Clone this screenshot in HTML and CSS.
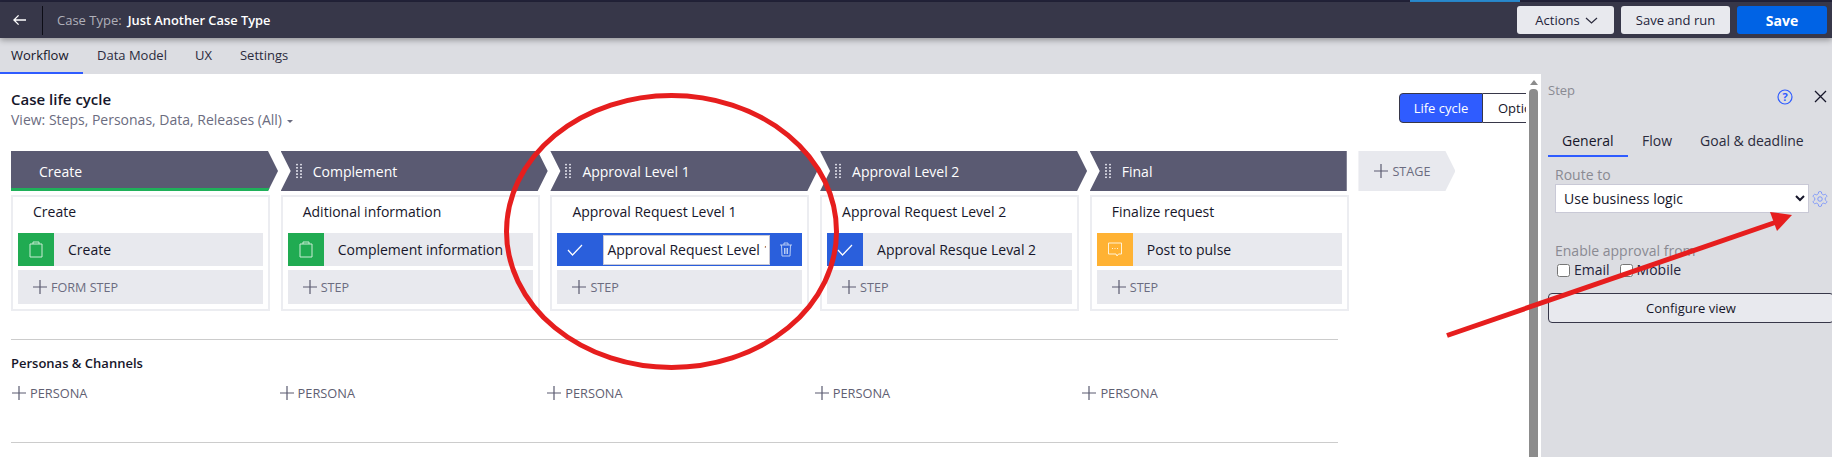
FILE: index.html
```html
<!DOCTYPE html>
<html lang="en">
<head>
    <meta charset="UTF-8">
    <meta name="viewport" content="width=device-width, initial-scale=1.0">
    <title>Case Type - Just Another Case Type</title>

    <link rel="stylesheet" href="styles.css">
</head>
<body>
    <svg class="sprite" width="0" height="0">
        <symbol id="plus" viewBox="0 0 14 14"><path d="M7 0v14M0 7h14" fill="none" stroke="currentColor" stroke-width="1.2"/></symbol>
        <symbol id="clipboard" viewBox="0 0 14 17"><path d="M4 3H1v13h12V3h-3M4 3V1h6v2z" fill="none" stroke="currentColor"/></symbol>
        <symbol id="check" viewBox="0 0 16 12"><path d="M1 6l4.5 5L15 1" fill="none" stroke="currentColor" stroke-width="1.2"/></symbol>
    </svg>

    <div class="top-strip"><span class="strip-active"></span></div>

    <header class="header">
        <button class="back" aria-label="Back">
            <svg width="14" height="12" viewBox="0 0 14 12"><path d="M6 1L1 6l5 5M1 6h13" fill="none" stroke="#fff" stroke-width="1.4"/></svg>
        </button>
        <span class="case-label">Case Type:</span>
        <span class="case-name">Just Another Case Type</span>
        <div class="header-actions">
            <button class="btn btn-actions">Actions
                <svg width="13" height="7" viewBox="0 0 13 7"><path d="M1 1l5.500 5L12 1" fill="none" stroke="#2b2b3d" stroke-width="1.2"/></svg>
            </button>
            <button class="btn btn-run">Save and run</button>
            <button class="btn btn-save">Save</button>
        </div>
    </header>

    <nav class="nav">
        <a class="nav-item active">Workflow</a>
        <a class="nav-item">Data Model</a>
        <a class="nav-item">UX</a>
        <a class="nav-item">Settings</a>
    </nav>

    <div class="workspace">
        <main class="main">
            <div class="main-head">
                <div>
                    <h1 class="title">Case life cycle</h1>
                    <p class="view-line">View: Steps, Personas, Data, Releases (All) <span class="caret"></span></p>
                </div>
                <div class="toggle">
                    <span class="toggle-on">Life cycle</span>
                    <span class="toggle-off">Options</span>
                </div>
            </div>

            <div class="board">
                <!-- Create -->
                <section class="col">
                    <div class="stage stage-first"><span class="stage-name">Create</span></div>
                    <div class="card">
                        <div class="card-title">Create</div>
                        <div class="step">
                            <span class="step-icon green"><svg width="14" height="17"><use href="#clipboard"/></svg></span>
                            <span class="step-name">Create</span>
                        </div>
                        <div class="add-row"><svg class="plus" width="14" height="14"><use href="#plus"/></svg>FORM STEP</div>
                    </div>
                </section>

                <!-- Complement -->
                <section class="col">
                    <div class="stage"><span class="grip"></span><span>Complement</span></div>
                    <div class="card">
                        <div class="card-title">Aditional information</div>
                        <div class="step">
                            <span class="step-icon green"><svg width="14" height="17"><use href="#clipboard"/></svg></span>
                            <span class="step-name">Complement information</span>
                        </div>
                        <div class="add-row"><svg class="plus" width="14" height="14"><use href="#plus"/></svg>STEP</div>
                    </div>
                </section>

                <!-- Approval Level 1 -->
                <section class="col">
                    <div class="stage"><span class="grip"></span><span>Approval Level 1</span></div>
                    <div class="card">
                        <div class="card-title">Approval Request Level 1</div>
                        <div class="step step-editing">
                            <span class="step-icon blue wide"><svg width="16" height="12"><use href="#check"/></svg></span>
                            <input class="step-input" type="text" value="Approval Request Level 1">
                            <svg class="trash" width="14" height="15" viewBox="0 0 14 15"><path d="M1 3h12M5 3V1h4v2M2.500 3l.5 11h8l.5-11M5.500 6v6M7 6v6M8.500 6v6" fill="none" stroke="#b9cdf5"/></svg>
                        </div>
                        <div class="add-row"><svg class="plus" width="14" height="14"><use href="#plus"/></svg>STEP</div>
                    </div>
                </section>

                <!-- Approval Level 2 -->
                <section class="col">
                    <div class="stage"><span class="grip"></span><span>Approval Level 2</span></div>
                    <div class="card">
                        <div class="card-title">Approval Request Level 2</div>
                        <div class="step">
                            <span class="step-icon blue"><svg width="16" height="12"><use href="#check"/></svg></span>
                            <span class="step-name">Approval Resque Leval 2</span>
                        </div>
                        <div class="add-row"><svg class="plus" width="14" height="14"><use href="#plus"/></svg>STEP</div>
                    </div>
                </section>

                <!-- Final -->
                <section class="col">
                    <div class="stage stage-last"><span class="grip"></span><span>Final</span></div>
                    <div class="card">
                        <div class="card-title">Finalize request</div>
                        <div class="step">
                            <span class="step-icon orange">
                                <svg width="16" height="16" viewBox="0 0 16 16"><path d="M1.500 1h13v11h-3l-1.500 2-1-2h-7.500zM5 6.500h1M7.500 6.500h1M10 6.500h1" fill="none" stroke="#fff2d6"/></svg>
                            </span>
                            <span class="step-name">Post to pulse</span>
                        </div>
                        <div class="add-row"><svg class="plus" width="14" height="14"><use href="#plus"/></svg>STEP</div>
                    </div>
                </section>

                <div class="add-stage"><svg class="plus" width="14" height="14"><use href="#plus"/></svg>STAGE</div>
            </div>

            <hr class="divider divider-top">
            <h2 class="section-title">Personas &amp; Channels</h2>
            <div class="personas">
                <div class="persona"><svg class="plus" width="14" height="14"><use href="#plus"/></svg>PERSONA</div>
                <div class="persona"><svg class="plus" width="14" height="14"><use href="#plus"/></svg>PERSONA</div>
                <div class="persona"><svg class="plus" width="14" height="14"><use href="#plus"/></svg>PERSONA</div>
                <div class="persona"><svg class="plus" width="14" height="14"><use href="#plus"/></svg>PERSONA</div>
                <div class="persona"><svg class="plus" width="14" height="14"><use href="#plus"/></svg>PERSONA</div>
            </div>
            <hr class="divider divider-bottom">
        </main>

        <div class="scrollbar"><span class="scroll-arrow"></span><span class="scroll-thumb"></span></div>

        <aside class="panel">
            <div class="panel-head">
                <span class="panel-title">Step</span>
                <svg class="help" width="16" height="16" viewBox="0 0 16 16"><circle cx="8" cy="8" r="7" fill="none" stroke="#2f5cff" stroke-width="1.2"/><text x="8" y="11.500" text-anchor="middle" class="help-mark">?</text></svg>
                <svg class="close" width="13" height="13" viewBox="0 0 13 13"><path d="M1 1l11 11M12 1L1 12" fill="none" stroke="#16162a" stroke-width="1.3"/></svg>
            </div>
            <div class="tabs">
                <span class="tab active">General</span>
                <span class="tab">Flow</span>
                <span class="tab">Goal &amp; deadline</span>
            </div>
            <div class="form">
                <label class="field-label">Route to</label>
                <div class="route-row">
                    <select class="route-select"><option>Use business logic</option></select>
                    <svg class="gear" width="18" height="18" viewBox="0 0 24 24" fill="none" stroke="#6f8cff" stroke-width="1.1">
                        <path d="M12.220 2h-.44a2 2 0 0 0-2 2v.18a2 2 0 0 1-1 1.730l-.43.25a2 2 0 0 1-2 0l-.15-.08a2 2 0 0 0-2.730.73l-.22.38a2 2 0 0 0 .73 2.730l.15.1a2 2 0 0 1 1 1.720v.51a2 2 0 0 1-1 1.740l-.15.09a2 2 0 0 0-.73 2.730l.22.38a2 2 0 0 0 2.730.73l.15-.08a2 2 0 0 1 2 0l.43.25a2 2 0 0 1 1 1.730V20a2 2 0 0 0 2 2h.44a2 2 0 0 0 2-2v-.18a2 2 0 0 1 1-1.730l.43-.25a2 2 0 0 1 2 0l.15.08a2 2 0 0 0 2.730-.73l.22-.39a2 2 0 0 0-.73-2.730l-.15-.08a2 2 0 0 1-1-1.740v-.5a2 2 0 0 1 1-1.740l.15-.09a2 2 0 0 0 .73-2.730l-.22-.38a2 2 0 0 0-2.730-.73l-.15.08a2 2 0 0 1-2 0l-.43-.25a2 2 0 0 1-1-1.730V4a2 2 0 0 0-2-2z"/>
                        <circle cx="12" cy="12" r="3"/>
                    </svg>
                </div>
                <label class="field-label approval-label">Enable approval from</label>
                <div class="checks">
                    <label class="check"><input type="checkbox">Email</label>
                    <label class="check"><input type="checkbox">Mobile</label>
                </div>
            </div>
            <button class="configure">Configure view</button>
        </aside>
    </div>

    <!-- red annotations drawn over the screenshot -->
    <svg class="annotations" width="1832" height="457" viewBox="0 0 1832 457">
        <ellipse cx="671.500" cy="231.500" rx="165" ry="136" fill="none" stroke="#e61e1e" stroke-width="5"/>
        <path d="M1447 335.500L1778 221.500" fill="none" stroke="#e61e1e" stroke-width="5"/>
        <path d="M1792 215L1770 212L1777 231z" fill="#e61e1e"/>
    </svg>
</body>
</html>
```

FILE: styles.css
```css
* {
    box-sizing: border-box;
}

body {
    font-family: "Open Sans", Arial, sans-serif;
    font-size: 13px;
    color: #16162a;
    background-color: #fff;
    margin: 0;
    width: 1832px;
    height: 457px;
    overflow: hidden;
    position: relative;
}

.sprite {
    position: absolute;
}

/* top bar */
.top-strip {
    height: 2px;
    background-color: #23233a;
    padding-left: 1410px;
}
.strip-active {
    display: block;
    width: 110px;
    height: 2px;
    background-color: #2b8fd6;
}

.header {
    height: 36px;
    background-color: #373749;
    display: flex;
    align-items: center;
    position: relative;
    z-index: 2;
    box-shadow: 0 2px 6px rgba(0, 0, 0, .35);
    padding-right: 5px;
}
.back {
    width: 43px;
    height: 29px;
    padding: 0 16px 0 13px;
    background: none;
    border: 0;
    border-right: 1px solid #0d0d16;
    display: flex;
    align-items: center;
    margin-right: 14px;
}
.case-label {
    color: #b0b0b9;
    margin-right: 6px;
}
.case-name {
    color: #fff;
    font-size: 12.85px;
    font-weight: 600;
}
.header-actions {
    margin-left: auto;
    display: flex;
    gap: 7px;
}
.btn {
    font-family: inherit;
    font-size: 13px;
    height: 28px;
    border: 0;
    border-radius: 3px;
    background-color: #e8e9ee;
    color: #23233a;
    display: flex;
    align-items: center;
    justify-content: center;
    gap: 5px;
}
.btn-actions {
    width: 97px;
    padding-right: 4px;
}
.btn-run { width: 109px; }
.btn-save {
    width: 90px;
    background-color: #0063e5;
    color: #fff;
    font-weight: 700;
    font-size: 14px;
}

/* tabs under the top bar */
.nav {
    height: 36px;
    background-color: #dcdde2;
    display: flex;
    align-items: center;
}
.nav-item {
    height: 36px;
    line-height: 35px;
    padding: 0 14px;
    color: #2b2b3d;
}
.nav-item.active {
    padding: 0 14px 0 11px;
    width: 83px;
    color: #16162a;
    border-bottom: 2px solid #2f5cff;
}

.workspace {
    display: flex;
    height: 383px;
}

/* canvas */
.main {
    width: 1529px;
    padding: 16px 3px 0 11px;
    overflow: hidden;
}
.main-head {
    display: flex;
    justify-content: space-between;
    align-items: flex-start;
}
.title {
    font-size: 15px;
    line-height: 18px;
    font-weight: 600;
    margin: 0 0 3px;
}
.view-line {
    font-size: 14px;
    line-height: 18px;
    color: #6b6c80;
    margin: 0;
}
.caret {
    display: inline-block;
    margin-left: 1px;
    vertical-align: middle;
    border: 3px solid transparent;
    border-top-color: #6b6c80;
    border-bottom: 0;
}
.toggle {
    width: 127px;
    height: 30px;
    margin-top: 3px;
    display: flex;
    overflow: hidden;
    line-height: 28px;
    white-space: nowrap;
}
.toggle-on {
    flex: 0 0 84px;
    background-color: #2f5cff;
    color: #fff;
    text-align: center;
    border: 1px solid #373749;
    border-radius: 4px 0 0 4px;
}
.toggle-off {
    flex: 0 0 70px;
    padding-left: 15px;
    border: 1px solid #373749;
    border-left: 0;
}

.board {
    display: flex;
    gap: 10.7px;
    margin-top: 22px;
    align-items: flex-start;
}
.col {
    width: 259px;
}
.stage {
    width: calc(100% + 8px);
    height: 40px;
    margin-bottom: 4px;
    background-color: #5a5a72;
    color: #fff;
    font-size: 14px;
    display: flex;
    align-items: center;
    padding-left: 14px;
    clip-path: polygon(0 0, calc(100% - 10px) 0, 100% 50%, calc(100% - 10px) 100%, 0 100%, 10px 50%);
}
.stage-first {
    padding-left: 28px;
    clip-path: polygon(0 0, calc(100% - 10px) 0, 100% 50%, calc(100% - 10px) 100%, 0 100%);
    border-bottom: 3px solid #1fb05a;
}
.stage-first .stage-name {
    padding-top: 3px;
}
.stage-last {
    width: calc(100% - 2px);
    clip-path: polygon(0 0, 100% 0, 100% 100%, 0 100%, 10px 50%);
}
.grip {
    width: 8px;
    height: 16px;
    margin-right: 10px;
    background-image: radial-gradient(circle, #d2d2de 1px, transparent 1.2px);
    background-size: 4px 3.2px;
}
.card {
    height: 116px;
    border: 2px solid #ecedf1;
    padding: 0 5px 5px;
}
.card-title {
    height: 30px;
    line-height: 30px;
    margin-bottom: 6px;
    padding-left: 15px;
    font-size: 14px;
    white-space: nowrap;
}
.step {
    height: 33px;
    background-color: #e8e9ee;
    display: flex;
    align-items: center;
    margin-bottom: 4px;
    font-size: 14px;
}
.step-icon {
    flex: 0 0 36px;
    height: 33px;
    display: flex;
    align-items: center;
    justify-content: center;
}
.green { background-color: #20ab52; color: #c9ecd4; }
.blue { background-color: #2a5fdc; color: #fff; }
.orange { background-color: #ffb233; }
.step-icon.wide {
    flex-basis: 46px;
    padding-right: 10px;
}
.step-name {
    margin-left: 14px;
    white-space: nowrap;
}
.step-editing {
    background-color: #2a5fdc;
}
.step-input {
    width: 167px;
    height: 30px;
    border: 1px solid #c9c9d6;
    padding: 0 3px;
    font-family: inherit;
    font-size: 14px;
    color: #16162a;
}
.trash {
    margin-left: 9px;
}
.add-row {
    height: 34px;
    background-color: #e8e9ee;
    color: #6b6c80;
    font-size: 12.6px;
    display: flex;
    align-items: center;
    padding-left: 15px;
}
.plus {
    color: #5a5b70;
    margin-right: 4px;
    flex: none;
}
.add-stage {
    width: 97px;
    height: 40px;
    margin-left: -1px;
    background-color: #e8e9ee;
    color: #6b6c80;
    font-size: 12.6px;
    display: flex;
    align-items: center;
    padding-left: 16px;
    clip-path: polygon(0 0, calc(100% - 10px) 0, 100% 50%, calc(100% - 10px) 100%, 0 100%);
}

.divider {
    width: 1327px;
    height: 1px;
    border: 0;
    background-color: #ccc;
    margin: 0;
}
.divider-top {
    margin-top: 28px;
}
.divider-bottom {
    margin-top: 40px;
}
.section-title {
    font-size: 13px;
    line-height: 18px;
    font-weight: 600;
    margin: 14px 0 12px;
}
.personas {
    display: flex;
    height: 18px;
}
.persona {
    width: 267.6px;
    color: #5f6072;
    font-size: 12.8px;
    display: flex;
    align-items: center;
    padding-left: 1px;
}

/* scrollbar between canvas and panel */
.scrollbar {
    width: 12px;
    padding-right: 3px;
}
.scroll-arrow {
    display: block;
    margin: 6px auto 4px;
    width: 0;
    border: 4px solid transparent;
    border-top: 0;
    border-bottom: 5px solid #8c8c8c;
}
.scroll-thumb {
    display: block;
    height: 380px;
    background-color: #8c8c8c;
    border-radius: 4px 4px 0 0;
}

/* right panel */
.panel {
    flex: 1;
    background-color: #dcdde2;
    padding: 7px 0 0 7px;
    overflow: hidden;
}
.panel-head {
    display: flex;
    align-items: flex-start;
    height: 50px;
}
.panel-title {
    color: #8a8a92;
    font-size: 13px;
    line-height: 18px;
}
.help {
    margin: 8px 0 0 202px;
    flex: none;
}
.help-mark {
    font-size: 11px;
    font-weight: 700;
    fill: #2f5cff;
}
.close {
    margin: 9px 0 0 21px;
    flex: none;
}
.tabs {
    display: flex;
    width: 284px;
    height: 26px;
    font-size: 14px;
}
.tab {
    padding: 0 14px;
    height: 26px;
    line-height: 20px;
    white-space: nowrap;
    color: #2b2b3d;
}
.tab.active {
    width: 80px;
    color: #16162a;
    border-bottom: 2px solid #2f5cff;
}
.form {
    padding: 9px 0 0 7px;
    font-size: 14px;
}
.field-label {
    display: block;
    color: #8a8a92;
    line-height: 18px;
}
.route-row {
    display: flex;
    align-items: center;
    gap: 2px;
}
.route-select {
    width: 254px;
    height: 29px;
    background-color: #fff;
    border: 1px solid #c9c9d6;
    padding-left: 4px;
    font-family: inherit;
    font-size: 14px;
    color: #16162a;
}
.approval-label {
    margin-top: 29px;
}
.checks {
    display: flex;
    gap: 8px;
    margin-top: 1px;
}
.check {
    display: flex;
    align-items: center;
    height: 18px;
    line-height: 18px;
    color: #23233a;
}
.check input {
    width: 13px;
    height: 13px;
    margin: 0 4px 0 2px;
}
.configure {
    display: block;
    width: 286px;
    height: 30px;
    margin-top: 14px;
    background-color: #e8e9ee;
    border: 1px solid #373749;
    border-radius: 4px;
    font-family: inherit;
    font-size: 13px;
    color: #16162a;
}

.annotations {
    position: absolute;
    top: 0;
    left: 0;
    z-index: 5;
    pointer-events: none;
}
```
